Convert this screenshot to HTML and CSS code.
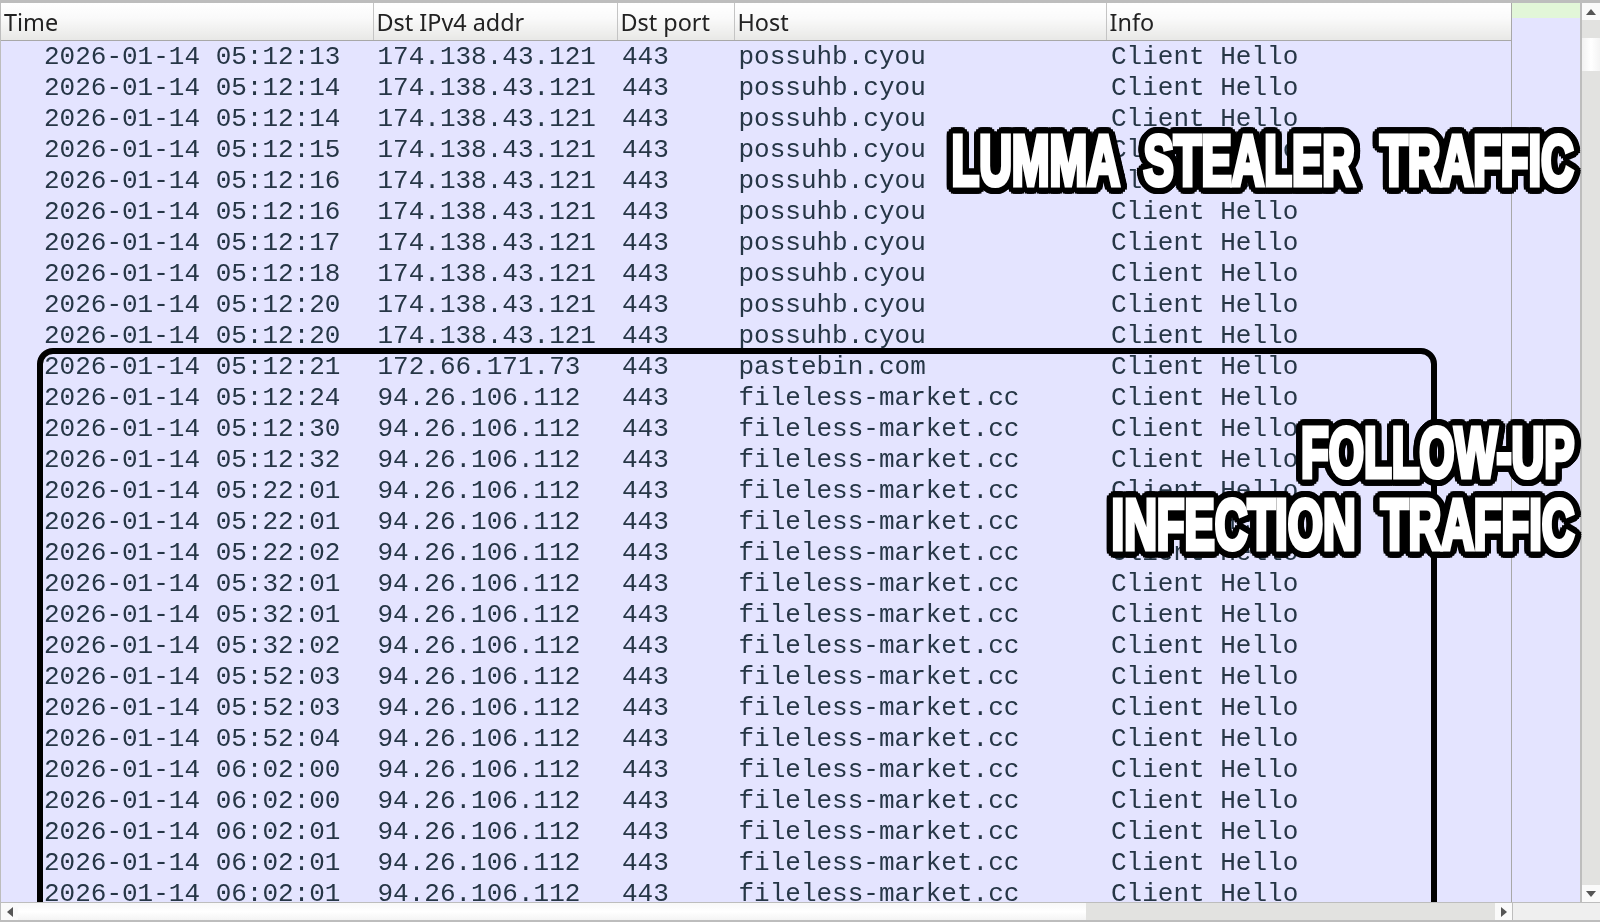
FILE: index.html
```html
<!DOCTYPE html>
<html lang="en">
<head>
  <meta charset="UTF-8" />
  <title>Lumma Stealer traffic</title>
  <link rel="stylesheet" href="styles.css">
</head>
<body>
  <div class="window">
    <div class="main">
      <div class="packet-list">
        <table class="packets">
          <colgroup>
            <col class="col-time" /><col class="col-dst" /><col class="col-port" /><col class="col-host" /><col class="col-info" />
          </colgroup>
          <thead>
            <tr><th>Time</th><th>Dst IPv4 addr</th><th>Dst port</th><th>Host</th><th>Info</th></tr>
          </thead>
          <tbody>
            <tr><td>2026-01-14 05:12:13</td><td>174.138.43.121</td><td>443</td><td>possuhb.cyou</td><td>Client Hello</td></tr>
            <tr><td>2026-01-14 05:12:14</td><td>174.138.43.121</td><td>443</td><td>possuhb.cyou</td><td>Client Hello</td></tr>
            <tr><td>2026-01-14 05:12:14</td><td>174.138.43.121</td><td>443</td><td>possuhb.cyou</td><td>Client Hello</td></tr>
            <tr><td>2026-01-14 05:12:15</td><td>174.138.43.121</td><td>443</td><td>possuhb.cyou</td><td>Client Hello</td></tr>
            <tr><td>2026-01-14 05:12:16</td><td>174.138.43.121</td><td>443</td><td>possuhb.cyou</td><td>Client Hello</td></tr>
            <tr><td>2026-01-14 05:12:16</td><td>174.138.43.121</td><td>443</td><td>possuhb.cyou</td><td>Client Hello</td></tr>
            <tr><td>2026-01-14 05:12:17</td><td>174.138.43.121</td><td>443</td><td>possuhb.cyou</td><td>Client Hello</td></tr>
            <tr><td>2026-01-14 05:12:18</td><td>174.138.43.121</td><td>443</td><td>possuhb.cyou</td><td>Client Hello</td></tr>
            <tr><td>2026-01-14 05:12:20</td><td>174.138.43.121</td><td>443</td><td>possuhb.cyou</td><td>Client Hello</td></tr>
            <tr><td>2026-01-14 05:12:20</td><td>174.138.43.121</td><td>443</td><td>possuhb.cyou</td><td>Client Hello</td></tr>
            <tr><td>2026-01-14 05:12:21</td><td>172.66.171.73</td><td>443</td><td>pastebin.com</td><td>Client Hello</td></tr>
            <tr><td>2026-01-14 05:12:24</td><td>94.26.106.112</td><td>443</td><td>fileless-market.cc</td><td>Client Hello</td></tr>
            <tr><td>2026-01-14 05:12:30</td><td>94.26.106.112</td><td>443</td><td>fileless-market.cc</td><td>Client Hello</td></tr>
            <tr><td>2026-01-14 05:12:32</td><td>94.26.106.112</td><td>443</td><td>fileless-market.cc</td><td>Client Hello</td></tr>
            <tr><td>2026-01-14 05:22:01</td><td>94.26.106.112</td><td>443</td><td>fileless-market.cc</td><td>Client Hello</td></tr>
            <tr><td>2026-01-14 05:22:01</td><td>94.26.106.112</td><td>443</td><td>fileless-market.cc</td><td>Client Hello</td></tr>
            <tr><td>2026-01-14 05:22:02</td><td>94.26.106.112</td><td>443</td><td>fileless-market.cc</td><td>Client Hello</td></tr>
            <tr><td>2026-01-14 05:32:01</td><td>94.26.106.112</td><td>443</td><td>fileless-market.cc</td><td>Client Hello</td></tr>
            <tr><td>2026-01-14 05:32:01</td><td>94.26.106.112</td><td>443</td><td>fileless-market.cc</td><td>Client Hello</td></tr>
            <tr><td>2026-01-14 05:32:02</td><td>94.26.106.112</td><td>443</td><td>fileless-market.cc</td><td>Client Hello</td></tr>
            <tr><td>2026-01-14 05:52:03</td><td>94.26.106.112</td><td>443</td><td>fileless-market.cc</td><td>Client Hello</td></tr>
            <tr><td>2026-01-14 05:52:03</td><td>94.26.106.112</td><td>443</td><td>fileless-market.cc</td><td>Client Hello</td></tr>
            <tr><td>2026-01-14 05:52:04</td><td>94.26.106.112</td><td>443</td><td>fileless-market.cc</td><td>Client Hello</td></tr>
            <tr><td>2026-01-14 06:02:00</td><td>94.26.106.112</td><td>443</td><td>fileless-market.cc</td><td>Client Hello</td></tr>
            <tr><td>2026-01-14 06:02:00</td><td>94.26.106.112</td><td>443</td><td>fileless-market.cc</td><td>Client Hello</td></tr>
            <tr><td>2026-01-14 06:02:01</td><td>94.26.106.112</td><td>443</td><td>fileless-market.cc</td><td>Client Hello</td></tr>
            <tr><td>2026-01-14 06:02:01</td><td>94.26.106.112</td><td>443</td><td>fileless-market.cc</td><td>Client Hello</td></tr>
            <tr><td>2026-01-14 06:02:01</td><td>94.26.106.112</td><td>443</td><td>fileless-market.cc</td><td>Client Hello</td></tr>
          </tbody>
        </table>
        <div class="followup-box"></div>
      </div>
      <div class="minimap"><div class="minimap-mark"></div></div>
      <div class="vscroll">
        <div class="arrow-btn"><svg width="12" height="8" viewBox="0 0 12 8"><path d="M6 1 L11 7 L1 7 Z" fill="#555" /></svg></div>
        <div class="vscroll-gap"></div>
        <div class="vscroll-thumb"></div>
        <div class="vscroll-track"></div>
        <div class="arrow-btn"><svg width="12" height="8" viewBox="0 0 12 8"><path d="M1 1 L11 1 L6 7 Z" fill="#555" /></svg></div>
      </div>
    </div>
    <div class="hbar">
      <div class="hscroll">
        <div class="arrow-btn"><svg width="8" height="12" viewBox="0 0 8 12"><path d="M7 1 L7 11 L1 6 Z" fill="#555" /></svg></div>
        <div class="hscroll-thumb"></div>
        <div class="hscroll-track"></div>
        <div class="arrow-btn"><svg width="8" height="12" viewBox="0 0 8 12"><path d="M1 1 L7 6 L1 11 Z" fill="#555" /></svg></div>
      </div>
      <div class="hbar-corner"></div>
    </div>
  </div>

  <div class="label label-lumma"><span>LUMMA  STEALER  TRAFFIC</span></div>
  <div class="label label-follow"><span>FOLLOW-UP</span></div>
  <div class="label label-infection"><span>INFECTION  TRAFFIC</span></div>
</body>
</html>
```

FILE: styles.css
```css
html, body { margin: 0; height: 100%; overflow: hidden; }
body { background-color: #bdbdbd; }

.window {
  height: 922px; box-sizing: border-box; padding: 3px 0 2px 1px;
  display: flex; flex-direction: column;
  filter: blur(0.4px);
}
.main { display: flex; height: 899px; }

.packet-list { position: relative; width: 1511px; overflow: hidden; background-color: #e4e4ff; }
.packets { border-collapse: collapse; table-layout: fixed; width: 1511px; }
.col-time { width: 372px; }
.col-dst { width: 244px; }
.col-port { width: 117px; }
.col-host { width: 372px; }
.col-info { width: 406px; }

.packets th {
  height: 37px; padding: 0 0 0 3px; text-align: left; font: 400 23.4px "Noto Sans", sans-serif; color: #222;
  background: linear-gradient(#ffffff, #fafafa 40%, #e8e8e6);
  border-right: 1px solid #c4c4c4; border-bottom: 1px solid #a8a8a8; white-space: nowrap;
}
.packets td {
  height: 30px; padding: 1px 0 0 4.5px; font: 26px/30px "Liberation Mono", monospace; color: #263646;
  white-space: nowrap; overflow: hidden;
}
.packets td:first-child { padding-left: 43px; }
.packets td:nth-child(3) { padding-left: 5px; }
.packets td:last-child { padding-left: 5px; }

.followup-box {
  position: absolute; left: 36px; top: 345px; width: 1388px; height: 600px;
  border: 6px solid #000; border-radius: 16px;
}

.minimap { width: 68px; background-color: #e4e4ff; border-left: 1px solid #a8a8a8; }
.minimap-mark { height: 15px; background-color: #e2f6d8; }

.vscroll { width: 18px; margin-left: 2px; display: flex; flex-direction: column; background-color: #e2e2e0; }
.arrow-btn { display: flex; align-items: center; justify-content: center; background-color: #fafafa; }
.vscroll .arrow-btn { height: 17px; }
.vscroll-gap { height: 18px; }
.vscroll-thumb { height: 33px; background: linear-gradient(90deg, #f2f2f2, #ffffff 50%, #f4f4f4); }
.vscroll-track { flex: 1; }

.hbar { display: flex; height: 18px; border-top: 1px solid #bdbdbd; }
.hscroll { width: 1511px; display: flex; background-color: #e2e2e0; }
.hscroll .arrow-btn { width: 17px; }
.hscroll-thumb { width: 1068px; background: linear-gradient(#f8f8f8, #ffffff 50%, #f4f4f4); }
.hscroll-track { flex: 1; }
.hbar-corner { flex: 1; background-color: #efefef; border-left: 1px solid #bdbdbd; }

/* the outline is chained shadows so it stays even after the text is squeezed */
.label {
  position: absolute; right: 26px; white-space: pre;
  font: 700 70px/72px "Liberation Sans", sans-serif; color: #fff;
  filter: drop-shadow(2px 0 0 #000) drop-shadow(-2px 0 0 #000) drop-shadow(0 2px 0 #000) drop-shadow(0 -2px 0 #000)
    drop-shadow(2px 2px 0 #000) drop-shadow(-2px -2px 0 #000) drop-shadow(2px -2px 0 #000) drop-shadow(-2px 2px 0 #000)
    blur(0.5px);
}
.label span {
  display: inline-block; transform: scaleX(0.647); transform-origin: right center;
  -webkit-text-stroke: 5px #fff;
}
.label-lumma { top: 125px; }
.label-follow { top: 417px; }
.label-infection { top: 489px; }
```
